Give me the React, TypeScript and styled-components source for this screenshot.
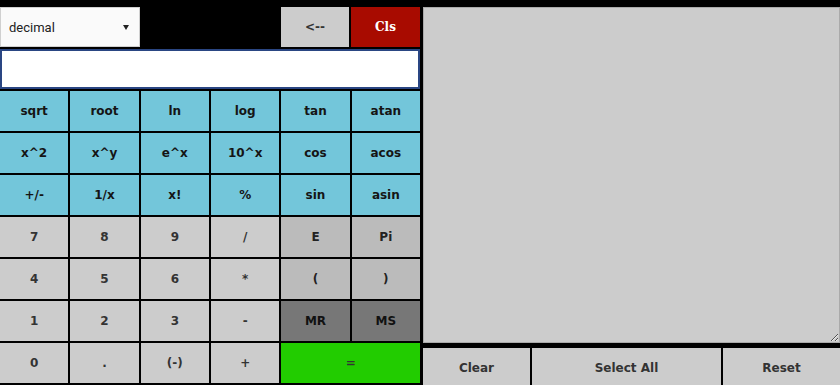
import React from 'react'
import styled, { createGlobalStyle } from 'styled-components'

const GlobalStyle = createGlobalStyle`
  html, body {
    margin: 0;
    padding: 0;
    background: #000;
    overflow: hidden;
  }
`

type Tone = 'fn' | 'num' | 'const' | 'mem' | 'eq'

const tones: Record<Tone, { bg: string; fg: string }> = {
  fn: { bg: '#73c6da', fg: '#151515' },
  num: { bg: '#cccccc', fg: '#333333' },
  const: { bg: '#bbbbbb', fg: '#222222' },
  mem: { bg: '#777777', fg: '#111111' },
  eq: { bg: '#22cc00', fg: '#333333' },
}

const Page = styled.div`
  display: grid;
  grid-template-columns: 420px 1fr;
  column-gap: 3px;
  padding-top: 7px;
  height: 378px;
  background: #000;
  font-family: 'DejaVu Sans', Verdana, sans-serif;
`
const LeftPanel = styled.div`
  display: flex;
  flex-direction: column;
`
const TopRow = styled.div`
  display: flex;
  height: 40px;
  gap: 2px;
`
const SelectBox = styled.div`
  position: relative;
  width: 140px;
`
const ModeSelect = styled.select`
  appearance: none;
  width: 100%;
  height: 100%;
  box-sizing: border-box;
  border: 1px solid #d0d0d0;
  background: #fafafa;
  color: #222;
  font-family: Roboto, 'Liberation Sans', sans-serif;
  font-size: 13px;
  padding: 0 0 0 8px;
  outline: none;
`
const Caret = styled.span`
  position: absolute;
  right: 11px;
  top: 18px;
  width: 0;
  height: 0;
  border-left: 3px solid transparent;
  border-right: 3px solid transparent;
  border-top: 5px solid #222;
  pointer-events: none;
`
const Spacer = styled.div`
  flex: 1;
`
const TopButton = styled.button<{ $danger?: boolean }>`
  width: ${(p) => (p.$danger ? '69px' : '68px')};
  border: none;
  background: ${(p) => (p.$danger ? '#a80b00' : '#cccccc')};
  color: ${(p) => (p.$danger ? '#fff' : '#333')};
  font-family: ${(p) => (p.$danger ? "'DejaVu Serif', Georgia, serif" : "'DejaVu Sans', Verdana, sans-serif")};
  font-weight: 700;
  font-size: 12px;
  padding: 0;
`
const Display = styled.input`
  margin-top: 2px;
  height: 40px;
  box-sizing: border-box;
  border: 2px solid #2a4683;
  background: #fff;
  outline: none;
  font-size: 16px;
  padding: 0 6px;
`
const Keypad = styled.div`
  margin-top: 1px;
  display: grid;
  grid-template-columns: repeat(6, 1fr);
  grid-auto-rows: 40px;
  gap: 2px;
  border-top: 1px solid #000;
`
const Key = styled.button<{ $tone: Tone; $span?: number }>`
  grid-column: span ${(p) => p.$span ?? 1};
  border: none;
  padding: 0;
  background: ${(p) => tones[p.$tone].bg};
  color: ${(p) => tones[p.$tone].fg};
  font-family: 'DejaVu Sans', Verdana, sans-serif;
  font-weight: 700;
  font-size: 12px;
`
const RightPanel = styled.div`
  display: flex;
  flex-direction: column;
`
const Output = styled.textarea`
  height: 336px;
  box-sizing: border-box;
  border: 1px solid #aaaaaa;
  background: #cccccc;
  resize: both;
  outline: none;
  margin: 0;
`
const ActionBar = styled.div`
  margin-top: 5px;
  display: grid;
  grid-template-columns: 107px 189px 1fr;
  gap: 2px;
  height: 40px;
`
const ActionButton = styled.button`
  border: none;
  background: #cccccc;
  color: #333;
  font-family: 'DejaVu Sans', Verdana, sans-serif;
  font-weight: 700;
  font-size: 12px;
  padding: 0;
`

const keys: { label: string; tone: Tone; span?: number }[] = [
  ...['sqrt', 'root', 'ln', 'log', 'tan', 'atan'].map((label) => ({ label, tone: 'fn' as Tone })),
  ...['x^2', 'x^y', 'e^x', '10^x', 'cos', 'acos'].map((label) => ({ label, tone: 'fn' as Tone })),
  ...['+/-', '1/x', 'x!', '%', 'sin', 'asin'].map((label) => ({ label, tone: 'fn' as Tone })),
  ...['7', '8', '9', '/'].map((label) => ({ label, tone: 'num' as Tone })),
  { label: 'E', tone: 'const' },
  { label: 'Pi', tone: 'const' },
  ...['4', '5', '6', '*'].map((label) => ({ label, tone: 'num' as Tone })),
  { label: '(', tone: 'const' },
  { label: ')', tone: 'const' },
  ...['1', '2', '3', '-'].map((label) => ({ label, tone: 'num' as Tone })),
  { label: 'MR', tone: 'mem' },
  { label: 'MS', tone: 'mem' },
  ...['0', '.', '(-)', '+'].map((label) => ({ label, tone: 'num' as Tone })),
  { label: '=', tone: 'eq', span: 2 },
]

export default function App() {
  return (
    <>
      <GlobalStyle />
      <Page>
        <LeftPanel>
          <TopRow>
            <SelectBox>
              <ModeSelect defaultValue="decimal">
                <option value="decimal">decimal</option>
                <option value="hex">hex</option>
                <option value="binary">binary</option>
              </ModeSelect>
              <Caret />
            </SelectBox>
            <Spacer />
            <TopButton>&lt;--</TopButton>
            <TopButton $danger>Cls</TopButton>
          </TopRow>
          <Display type="text" />
          <Keypad>
            {keys.map((k, i) => (
              <Key key={i} $tone={k.tone} $span={k.span}>
                {k.label}
              </Key>
            ))}
          </Keypad>
        </LeftPanel>
        <RightPanel>
          <Output />
          <ActionBar>
            <ActionButton>Clear</ActionButton>
            <ActionButton>Select All</ActionButton>
            <ActionButton>Reset</ActionButton>
          </ActionBar>
        </RightPanel>
      </Page>
    </>
  )
}
